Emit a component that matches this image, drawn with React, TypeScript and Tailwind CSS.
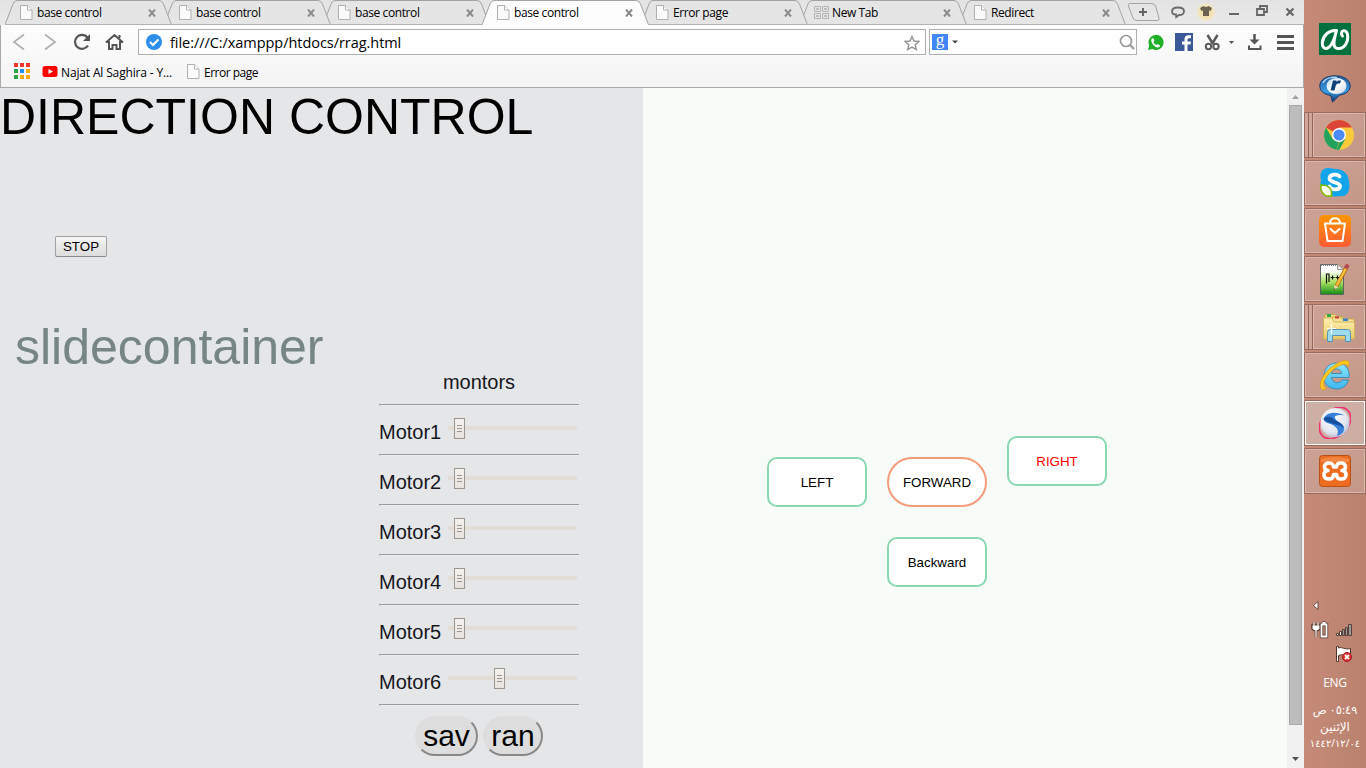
import React from "react";

const ui = "font-['Open_Sans','Noto_Sans',sans-serif]";

function PageIcon() {
  return (
    <svg width="13" height="15" viewBox="0 0 13 15" className="shrink-0">
      <path d="M.5.5h7l4.500 4.500v9.500H.5z" fill="#fafafa" stroke="#b0b0b0" />
      <path d="M7.500.5v4.500h4.500" fill="#fff" stroke="#b0b0b0" />
    </svg>
  );
}

function GridIcon() {
  return (
    <svg width="15" height="13" viewBox="0 0 15 13" className="-ml-px shrink-0" fill="none" stroke="#b4b4b4">
      <path d="M.5.5h6v5h-6zM8.500.5h6v5h-6zM.5 7.500h6v5h-6zM8.500 7.500h6v5h-6z" />
      <path d="M2.500 2.500h2v1h-2zM10.500 2.500h2v1h-2zM2.500 9.500h2v1h-2zM10.500 9.500h2v1h-2z" />
    </svg>
  );
}

function Tab({ title, active, grid, z }: { title: string; active?: boolean; grid?: boolean; z: string }) {
  return (
    <div className={`relative -mr-2 h-[25px] w-[167px] shrink-0 ${z}`}>
      <svg width="167" height="25" viewBox="0 0 167 25" className="absolute inset-0">
        <path
          d="M0 25 L.5 23.500 L8 4 Q9.500 .5 12 .5 H154 Q157 .5 158.500 4 L166 23.500 L166.500 25"
          fill={active ? "#fdfdfd" : "#e5e5e5"}
          stroke="#a3a3a3"
        />
        {!active && <path d="M0 24.500h167" stroke="#b2b2b2" />}
        {active && <path d="M1 24.500h165" stroke="#fdfdfd" strokeWidth="1.500" />}
      </svg>
      <div className="relative flex h-[25px] items-center pl-[15px]">
        <div className="flex w-[17px] shrink-0">{grid ? <GridIcon /> : <PageIcon />}</div>
        <span className="flex-1 whitespace-nowrap pt-px text-[12px] leading-none tracking-[-0.4px] text-black">{title}</span>
        <svg width="8" height="8" viewBox="0 0 8 8" className="mr-[16px] mt-px">
          <path d="M1 .5l6 7M7 .5l-6 7" stroke="#8b8b8b" strokeWidth="2" />
        </svg>
      </div>
    </div>
  );
}

function TabStrip() {
  return (
    <div className="relative z-10 flex h-[25px] items-start bg-linear-to-b from-[#e3e3e3] to-[#e9e9e9] pl-[5px]">
      <Tab title="base control" z="z-[6]" />
      <Tab title="base control" z="z-[5]" />
      <Tab title="base control" z="z-[4]" />
      <Tab title="base control" active z="z-[10]" />
      <Tab title="Error page" z="z-[3]" />
      <Tab title="New Tab" grid z="z-[2]" />
      <Tab title="Redirect" z="z-[1]" />
      <svg width="178" height="25" viewBox="1126 0 178 25" className="ml-[8px] shrink-0" fill="none">
        <path d="M1126 24.500h178" stroke="#b2b2b2" />
        <path d="M1129.500 3.500h22q3 0 4 2.500l3.500 12q1 2.500-2 2.500h-20q-3 0-4-2.500l-4.500-12q-.8-2.500 1-2.500z" stroke="#a3a3a3" />
        <path d="M1139 12h8M1143 8v8" stroke="#666" strokeWidth="2" />
        <path d="M1176 14.500c-3 0-4-1.500-4-3 0-2.500 2.500-4 6-4s6 1.500 6 3.700-2 3.800-5 3.800l-2.800 2z" stroke="#6a6a6a" strokeWidth="1.800" />
        <circle cx="1206" cy="12" r="9" fill="#f8e6b5" opacity=".65" />
        <circle cx="1206" cy="12" r="7" fill="#f4dda0" opacity=".6" />
        <path d="M1203.500 6q2.500 2 5 0l3.500 2-1.500 3-1.500-.5v5.500h-6v-5.500l-1.500.5-1.500-3z" fill="#6b6250" />
        <path d="M1229 14h10" stroke="#666" strokeWidth="2" />
        <path d="M1257 9h7v6h-7zM1260 8v-2h7v6h-3" stroke="#666" strokeWidth="1.800" />
        <path d="M1286.500 8.500l7 7M1293.500 8.500l-7 7" stroke="#666" strokeWidth="2.200" />
      </svg>
    </div>
  );
}

function Toolbar() {
  return (
    <div className="h-[63px] border-x border-b border-[#a9a9a9] bg-linear-to-b from-[#fdfdfd] to-[#f4f4f4]">
      <div className="flex h-[34px] items-center">
        <svg width="137" height="34" viewBox="1 24 137 34" fill="none" className="shrink-0">
          <path d="M24 33.500l-10 7.500 10 7.500" stroke="#b2b2b2" strokeWidth="1.800" />
          <path d="M45 33.500l10 7.500-10 7.500" stroke="#b2b2b2" strokeWidth="1.800" />
          <path d="M87.500 36.500A7 7 0 1 0 88 44.500" stroke="#555" strokeWidth="2.200" />
          <path d="M90 33v7h-7z" fill="#555" />
          <path d="M106 41.500l8.500-7.500 8.500 7.500M109 40v8h3.500v-4h4v4h3.500v-8M119.500 34v3" stroke="#555" strokeWidth="2" />
        </svg>
        <div className="flex h-[26px] w-[788px] shrink-0 items-center border border-[#b0b0b0] bg-white pl-[7px] pr-[5px]">
          <svg width="16" height="16" viewBox="0 0 16 16" className="shrink-0">
            <circle cx="8" cy="8" r="8" fill="#2f8eec" />
            <path d="M4 8l3 3 5.500-5.500" stroke="#fff" strokeWidth="2.200" fill="none" />
          </svg>
          <span className="ml-[8px] flex-1 whitespace-nowrap pt-[2px] text-[14.500px] leading-none tracking-[-0.050px] text-black">file:///C:/xamppp/htdocs/rrag.html</span>
          <svg width="16" height="16" viewBox="0 0 16 16" className="mt-px">
            <path d="M8 1.500l2 4.500 4.800.5-3.600 3.200 1.100 4.800L8 12l-4.300 2.500 1.100-4.800L1.200 6.500 6 6z" fill="none" stroke="#999" strokeWidth="1.500" />
          </svg>
        </div>
        <div className="ml-[3px] flex h-[26px] w-[208px] shrink-0 items-center border border-[#b0b0b0] bg-white pl-[2px] pr-[1px]">
          <div className="flex h-[16px] w-[16px] items-center justify-center bg-[#4285f4] font-['Liberation_Serif',serif] text-[17px] leading-none text-white">
            <span className="-mt-[5px]">g</span>
          </div>
          <svg width="6" height="4" viewBox="0 0 6 4" className="ml-[4px]"><path d="M0 .5h6l-3 3z" fill="#444" /></svg>
          <svg width="16" height="16" viewBox="0 0 16 16" className="ml-auto" fill="none">
            <circle cx="7" cy="7" r="5.500" stroke="#9a9a9a" strokeWidth="1.700" />
            <path d="M11 11l4 4" stroke="#9a9a9a" strokeWidth="2.200" />
          </svg>
        </div>
        <svg width="160" height="34" viewBox="1141 24 160 34" fill="none" className="ml-[4px] shrink-0">
          <path d="M1148 49l1.200-4.500A7.500 7.500 0 1 1 1152.500 48z" fill="#1fae25" />
          <path d="M1152 37.500c-1 1-1 2.500 0 4.500 1.500 2.500 3 4 5.500 4.500 1.500 0 2.500-1 2.500-2l-2.500-1.500-1.300 1c-1.500-.8-2.200-1.800-2.700-3l1-1.200-1-2.500z" fill="#fff" />
          <path d="M1175 32h18v18h-18z" fill="#3b5998" />
          <path d="M1184.500 50v-6.500h-2.500v-3h2.500v-2.200c0-2.800 1.500-4 4-4h2.500v3h-1.500c-1.500 0-2 .5-2 1.500v1.700h3.500l-.5 3h-3v6.500z" fill="#fff" />
          <path d="M1207.500 34l5.500 9M1217.500 34l-5.500 9" stroke="#5a5a5a" strokeWidth="2.500" />
          <circle cx="1208.500" cy="45.500" r="2.700" stroke="#5a5a5a" strokeWidth="2" />
          <circle cx="1216" cy="45.500" r="2.700" stroke="#5a5a5a" strokeWidth="2" />
          <path d="M1229 40h5l-2.500 3z" fill="#555" />
          <path d="M1254.500 33v9" stroke="#555" strokeWidth="2.500" />
          <path d="M1249.500 38.500h10l-5 5z" fill="#555" />
          <path d="M1249 44.500v3.500h11.500v-3.500" stroke="#555" strokeWidth="2" />
          <path d="M1277 35.500h17M1277 41.500h17M1277 47.500h17" stroke="#555" strokeWidth="3" />
        </svg>
      </div>
      <div className="flex h-[24px] items-center pl-[13px] text-[12px] leading-none text-black">
        <svg width="16" height="16" viewBox="0 0 16 16" className="shrink-0">
          <path d="M0 0h4v4H0zM6 0h4v4H6zM12 0h4v4h-4z" fill="#f0392b" />
          <path d="M0 6h4v4H0zM0 12h4v4H0z" fill="#2fa24c" />
          <path d="M6 6h4v4H6z" fill="#2090f0" />
          <path d="M12 6h4v4h-4zM6 12h4v4H6zM12 12h4v4h-4z" fill="#f9ab12" />
        </svg>
        <svg width="16" height="12" viewBox="0 0 16 12" className="ml-[12px] mt-px shrink-0">
          <rect x=".5" width="15" height="11" rx="2.500" fill="#f00" />
          <path d="M6.500 3v5l4.500-2.500z" fill="#fff" />
        </svg>
        <span className="ml-[3px] w-[126px] whitespace-nowrap pt-[3px] tracking-[-0.150px]">Najat Al Saghira - Y...</span>
        <PageIcon />
        <span className="ml-[4px] whitespace-nowrap pt-[3px] tracking-[-0.50px]">Error page</span>
      </div>
    </div>
  );
}

function Rule() {
  return <div className="h-[2px] w-[200px] border-b border-l border-t border-b-[#eeeeee] border-l-[#9a9a9a] border-t-[#9a9a9a]" />;
}

function Motor({ name, value }: { name: string; value: number }) {
  return (
    <div>
      <div className="flex h-[48px] w-[200px] items-start">
        <span className="w-[69px] pt-[15px] text-[20px] leading-[23px] text-[#16161c]">{name}</span>
        <div className="relative mt-[20px] h-[4px] w-[129px] bg-[#e2ddd6]">
          <div
            className="absolute -top-[8px] flex h-[21px] w-[11px] flex-col items-center justify-center gap-[2px] border border-[#9d968e] bg-linear-to-b from-[#f4f2ef] to-[#e7e2de]"
            style={{ left: value }}
          >
            <i className="h-px w-[5px] bg-[#9d968e]" />
            <i className="h-px w-[5px] bg-[#9d968e]" />
            <i className="h-px w-[5px] bg-[#9d968e]" />
          </div>
        </div>
      </div>
      <Rule />
    </div>
  );
}

const motors = [
  { name: "Motor1", value: 6 },
  { name: "Motor2", value: 6 },
  { name: "Motor3", value: 6 },
  { name: "Motor4", value: 6 },
  { name: "Motor5", value: 6 },
  { name: "Motor6", value: 46 },
];

function ControlPanel() {
  const round = "h-[40px] rounded-[20px] border-2 border-t-[#dddddd] border-l-[#dddddd] border-r-[#888888] border-b-[#888888] bg-[#dddddd] text-[30px] leading-[34px] text-black";
  return (
    <section className="h-[680px] w-[643px] shrink-0 overflow-hidden bg-[#e5e6e8]">
      <h1 className="whitespace-nowrap pt-px text-[50px] leading-[57px] text-black">DIRECTION CONTROL</h1>
      <button className="ml-[55px] mt-[90px] block h-[21px] w-[52px] rounded-[2px] border border-[#a0a0a0] border-b-[#8c8c8c] bg-linear-to-b from-[#f6f6f6] to-[#dcdcdc] text-[13.330px] leading-[18px] text-black">STOP</button>
      <h2 className="ml-[15px] mt-[61px] h-[50px] text-[50px] leading-[58px] text-[#778583]">slidecontainer</h2>
      <div className="ml-[379px] w-[200px]">
        <p className="mb-[10px] mt-[3px] h-[23px] text-center text-[20px] leading-[23px] text-[#16161c]">montors</p>
        <Rule />
        {motors.map((m) => <Motor key={m.name} {...m} />)}
        <div className="ml-[36px] mt-[10px] flex gap-[5px]">
          <button className={`w-[63px] ${round}`}>sav</button>
          <button className={`w-[60px] ${round}`}>ran</button>
        </div>
      </div>
    </section>
  );
}

function DirectionPad() {
  const base = "h-[50px] w-[100px] border-2 bg-white pt-px text-[13.330px]";
  return (
    <section className="flex-1 bg-[#f8fcf9]">
      <div className="ml-[124px] mt-[348px] flex gap-5">
        <button className={`${base} mt-[21px] rounded-[10px] border-[#8ad8b2] text-black`}>LEFT</button>
        <div className="mt-[21px] flex flex-col gap-[30px]">
          <button className={`${base} rounded-[25px] border-[#f49d7c] text-black`}>FORWARD</button>
          <button className={`${base} rounded-[10px] border-[#8ad8b2] text-black`}>Backward</button>
        </div>
        <button className={`${base} rounded-[10px] border-[#8ad8b2] text-[#f00]`}>RIGHT</button>
      </div>
    </section>
  );
}

function Scrollbar() {
  return (
    <div className="flex w-[17px] shrink-0 flex-col items-center bg-[#f1f1f1]">
      <svg width="17" height="17" viewBox="0 0 17 17"><path d="M5 11h7L8.500 7z" fill="#a3a3a3" /></svg>
      <div className="h-[620px] w-[13px] border border-[#a8a8a8] bg-[#bcbcbc]" />
      <svg width="17" height="17" viewBox="0 0 17 17" className="mt-auto"><path d="M5 6h7l-3.500 4z" fill="#505050" /></svg>
    </div>
  );
}

function TaskButton({ children, active, stacked }: { children: React.ReactNode; active?: boolean; stacked?: boolean }) {
  return (
    <div className="flex h-[46px] w-full border border-[#9b6a5c]">
      {stacked && (
        <>
          <div className="w-[4px] border-r border-[#94675a] bg-[#cfa799]" />
          <div className="w-[4px] border-r border-[#94675a] bg-[#cfa799]" />
        </>
      )}
      <div className={`flex flex-1 items-center justify-center border ${active ? "border-white bg-linear-to-br from-[#cfb0a5] to-[#cdaca1]" : "border-[#d9b9ae] bg-linear-to-br from-[#cda294] to-[#c49788]"}`}>
        <svg width="32" height="32" viewBox="0 0 32 32" className="shrink-0">{children}</svg>
      </div>
    </div>
  );
}

function Taskbar() {
  return (
    <aside className="flex h-[768px] w-[62px] shrink-0 flex-col items-center bg-linear-to-r from-[#c68b78] to-[#b9816e] text-white">
      <svg width="32" height="32" viewBox="0 0 32 32" className="mt-[23px]">
        <path d="M0 0h32v32H0z" fill="#00703f" />
        <path
          d="M17.500 7.500C10 6.500 4 13 3.300 19.500 3 24 5 26 8 25.300 13 24 16 14 17.500 7.500 16 13 14.500 18 15 21.500 15.500 25 18 26 21 25.500 26 24.500 29 19 28.800 13.500 28.600 9 26.500 7.500 24.500 7.800 22 8.300 22 11.500 23.500 13"
          fill="none"
          stroke="#fff"
          strokeWidth="3"
          strokeLinejoin="round"
          strokeLinecap="round"
        />
      </svg>
      <svg width="32" height="28" viewBox="0 0 32 28" className="mt-[20px]">
        <defs>
          <linearGradient id="realRing" x2="0" y2="1"><stop stopColor="#245b9c" /><stop offset=".6" stopColor="#3c9be1" /><stop offset="1" stopColor="#0c3568" /></linearGradient>
          <linearGradient id="realFace" x2="1" y2="1"><stop stopColor="#b9d9ee" /><stop offset=".5" stopColor="#fff" /><stop offset="1" stopColor="#c7d3df" /></linearGradient>
        </defs>
        <path d="M16 .8C7 .8.800 5 .800 11c0 5 4.500 8.500 11 9.500l1.700 6.500 7-6.800c6-1 10.700-4.200 10.700-9.200C31.200 5 25 .8 16 .8z" fill="url(#realRing)" stroke="#173b6b" />
        <ellipse cx="17.500" cy="11" rx="10" ry="8" fill="url(#realFace)" />
        <path d="M4 8C6 3 13 2 18 2.500" stroke="#a9d4f2" strokeWidth="1.500" fill="none" />
        <path d="M11.500 15.500L14 5.500h3.500l-.3 1.300c1.200-1.200 3-1.500 4.800-1.300l-1 3c-2.200-.3-3.700.3-4.200 2l-1.300 5z" fill="#103f79" />
      </svg>
      <div className="mt-[9px] flex w-full flex-col gap-[2px]">
        <TaskButton stacked>
          <circle cx="16" cy="16" r="15" fill="#f9cb3c" />
          <path d="M16 16L3 8.500A15 15 0 0 1 29 8.500H16z" fill="#db4437" />
          <path d="M3 8.500L9.500 19.700 16 23l-2.500 7.800A15 15 0 0 1 3 8.500z" fill="#23a15e" />
          <path d="M22.500 19.700l-6.200 11L13.500 31 17 22z" fill="#23a15e" />
          <circle cx="16" cy="16" r="7" fill="#fff" /><circle cx="16" cy="16" r="5.600" fill="#4c8bf5" />
        </TaskButton>
        <TaskButton>
          <path d="M9 1c4 0 5 1 8 1 8 0 13 6 13 13 2 8-2 16-9 14-4 1-9 1-13-2C1 23 1 17 2 13 0 6 3 1 9 1z" fill="#12a5eb" />
          <path d="M20.500 9.500C18.500 6.500 10.500 7 10.500 11.500c0 4.500 10.500 3.500 10.500 7.500 0 4.500-8.500 4.500-10.500.5" stroke="#fff" strokeWidth="3.800" fill="none" strokeLinecap="round" />
          <path d="M2 18c4 .5 6.500 0 8 2.500 2.500 1.500 3 4 2.500 8.500-4 .5-7 0-8.500-3C2 24 1.500 21 2 18z" fill="#fff" stroke="#7fba00" strokeWidth="1.600" />
        </TaskButton>
        <TaskButton>
          <defs><linearGradient id="shopBag" x2="0" y2="1"><stop stopColor="#ff9500" /><stop offset="1" stopColor="#ff5b35" /></linearGradient></defs>
          <rect width="32" height="32" rx="5" fill="url(#shopBag)" />
          <path d="M6 8.500h20L23.500 26h-15zM11 8C11 1.500 21 1.500 21 8M11.500 14l4.500 4 4.500-4" fill="none" stroke="#fff" strokeWidth="2" strokeLinejoin="round" strokeLinecap="round" />
        </TaskButton>
        <TaskButton>
          <defs><linearGradient id="notePaper" x2="0" y2="1"><stop offset=".2" stopColor="#fff" /><stop offset=".6" stopColor="#a6e05e" /><stop offset="1" stopColor="#168a16" /></linearGradient></defs>
          <path d="M1.500 1.500h17l6 5v25h-23z" fill="url(#notePaper)" stroke="#626262" />
          <path d="M2 2h16" stroke="#777" strokeWidth="2" strokeDasharray="1 1" />
          <path d="M18.500 1.500v5h6" fill="#ddd" stroke="#999" />
          <path d="M7.500 20.500v-9.500h2.500v8M11.500 14.500h4M13.500 12.500v4M16.500 14.500h4M18.500 12.500v4" fill="none" stroke="#111" strokeWidth="1.200" />
          <path d="M28 3.500L17.500 23" stroke="#b66b13" strokeWidth="4" /><path d="M27.700 4L17.700 22.500" stroke="#f7c33d" strokeWidth="2.400" />
          <path d="M26.500 5.500L29 1.500" stroke="#b44b56" strokeWidth="4" /><path d="M15.500 22l4 2-4.500 3z" fill="#f1d4a1" /><path d="M15.500 25l1 1-1.500 1z" fill="#222" />
        </TaskButton>
        <TaskButton stacked>
          <defs><linearGradient id="folderFace" x2="0" y2="1"><stop stopColor="#fff1b4" /><stop offset="1" stopColor="#e8ca64" /></linearGradient></defs>
          <path d="M2 10V3.500h10l2 2h6v5" fill="#f1dc86" stroke="#c8a94c" /><path d="M4 3h4v3H4z" fill="#37a34a" />
          <path d="M9 11V6h8l2 2h12v5H9z" fill="#f6e397" stroke="#c8a94c" /><path d="M12 5.500h4v2h-4z" fill="#c83d34" /><path d="M20 7.500h5v2.500h-5z" fill="#3985cc" />
          <path d="M.5 7h8l3 4h20v17H.5z" fill="url(#folderFace)" stroke="#d1b35a" />
          <path d="M4.500 30.500v-9q0-3 3-3h17q3 0 3 3v9h-5v-6h-13v6z" fill="#9ed9ee" stroke="#5795b7" />
          <path d="M8.500 13v10M4 17.500h9" stroke="#fff" strokeWidth="1.200" />
        </TaskButton>
        <TaskButton>
          <defs><linearGradient id="browserE" x2="0" y2="1"><stop stopColor="#8ce6fb" /><stop offset="1" stopColor="#3db7ee" /></linearGradient></defs>
          <path fillRule="evenodd" d="M30 18.500H12.500c.5 3.500 3 5 5.500 5 2.500 0 4-.8 5-2.500h6.500C27.500 27 23.500 30 17.500 30 9.500 30 5 25 5 17.500S9.500 4 17.500 4C26 4 31 9.500 30 18.500zM12.500 14.500h10c-.3-3-2-4.500-5-4.500s-4.700 1.700-5 4.500z" fill="url(#browserE)" stroke="#2b83b8" strokeWidth=".8" />
          <path d="M3 30.500C-1.500 27 3 15 14 7 21 1.500 28.500 0 29.800 3c.7 1.500 0 3.500-.8 5-.5-4-6-3.500-12.500 1C7.500 15.500 2.500 24 5.500 28l2 1.500c-1.500 1.300-3 1.500-4.500 1z" fill="#ffc91f" stroke="#d69314" strokeWidth=".7" />
        </TaskButton>
        <TaskButton active>
          <defs><radialGradient id="orb" cx=".4" cy=".35" r=".7"><stop stopColor="#fff" /><stop offset=".7" stopColor="#e2e5ef" /><stop offset="1" stopColor="#b4bdd3" /></radialGradient></defs>
          <ellipse cx="16" cy="16" rx="18" ry="13" transform="rotate(-45 16 16)" stroke="#ef2f72" strokeWidth="1.600" fill="none" />
          <circle cx="16" cy="15.500" r="14.500" fill="url(#orb)" />
          <path d="M4.500 12C7 5 17 4 25.500 8.500c-5-1-10.500-.5-9.500 2.500 1 4 8.500 4.500 9 10 .3 4-2.500 6.500-7 8 2-5 .5-8-3.500-10.500C10.500 15.500 6 17 4.500 12z" fill="#3980da" />
          <path d="M4.500 12c2-3 6.500-3 9.500-.5 3 3.500 10 4 11 9.500-4.500-4-9.500-3-13-5-2-1-5-1-7.500-4z" fill="#174f9f" />
        </TaskButton>
        <TaskButton>
          <rect x=".5" y=".5" width="31" height="31" rx="3" fill="#ee6c20" stroke="#b75118" />
          <path d="M2 4Q16 0 30 4v3H2z" fill="#f59a5c" opacity=".6" />
          <path d="M10 8c-3 0-4.500 1.500-4.500 3.800S7 15.300 9 15.500c-2.500.3-4 1.800-4 4.200C5 22.500 7 24 10 24s4.500-1.500 4.500-4.500h3c0 3 1.500 4.500 4.500 4.500s5-1.500 5-4.300c0-2.400-1.500-3.900-4-4.200 2-.2 3.500-1.200 3.500-3.700S25 8 22 8c-3 0-4.500 1.800-4.500 4h-3c0-2.200-1.500-4-4.500-4z" fill="none" stroke="#fff" strokeWidth="3.600" strokeLinejoin="round" />
        </TaskButton>
      </div>
      <svg width="62" height="74" viewBox="1304 596 62 74" className="mt-[102px] shrink-0">
        <path d="M1318 601.500v8l-4.500-4z" fill="#fff" stroke="#65483f" />
        <path d="M1314 622v4M1318 622v4M1312.500 625.500h7v3q-1 2-3.500 2t-3.500-2zM1316 630v7" fill="none" stroke="#57382f" strokeWidth="2.600" />
        <path d="M1314 622v4M1318 622v4M1316 630v7" fill="none" stroke="#fff" strokeWidth="1.200" />
        <path d="M1312.500 625.500h7v3q-1 2-3.500 2t-3.500-2z" fill="#fff" />
        <path d="M1321.500 624.500h5v12h-5zM1322.500 623h3" fill="none" stroke="#57382f" strokeWidth="3.400" /><path d="M1321.500 624.500h5v12h-5zM1322.500 623h3" fill="none" stroke="#fff" strokeWidth="1.800" />
        <path d="M1336.500 633.500h2v2h-2zM1339.500 631.500h2v4h-2z" fill="#fff" stroke="#594039" />
        <path d="M1342.500 629.500h2v6h-2zM1345.500 627.500h2v8h-2zM1348.500 624.500h3v11h-3z" fill="#999" stroke="#594039" />
        <path d="M1336.500 646.500h2v1.500c4-1.500 6 2 12 .5v7c-5 1.500-7-2-12 0v6h-2z" fill="#fff" stroke="#54352d" />
        <circle cx="1347" cy="657" r="4.500" fill="#df3030" stroke="#a51c22" /><path d="M1345 655l4 4M1349 655l-4 4" stroke="#fff" strokeWidth="1.800" />
      </svg>
      <div className="mt-[4px] text-[12px] leading-[18px] tracking-[-0.3px]">ENG</div>
      <div dir="rtl" className="mt-[9px] flex flex-col items-center whitespace-nowrap font-['Noto_Sans','DejaVu_Sans',sans-serif] leading-[17px]">
        <span className="text-[11.500px]">٠٥:٤٩ ص</span>
        <span className="text-[12px]">الإثنين</span>
        <span className="text-[10px] tracking-[-0.20px]">١٤٤٢/١٢/٠٤</span>
      </div>
    </aside>
  );
}

export default function App() {
  return (
    <div className={`flex h-[768px] w-[1366px] overflow-hidden ${ui}`}>
      <div className="flex w-[1304px] shrink-0 flex-col bg-[#f1f1f1]">
        <TabStrip />
        <Toolbar />
        <main className="flex h-[680px] font-['Liberation_Sans',Arial,sans-serif]">
          <ControlPanel />
          <DirectionPad />
          <Scrollbar />
        </main>
      </div>
      <Taskbar />
    </div>
  );
}
